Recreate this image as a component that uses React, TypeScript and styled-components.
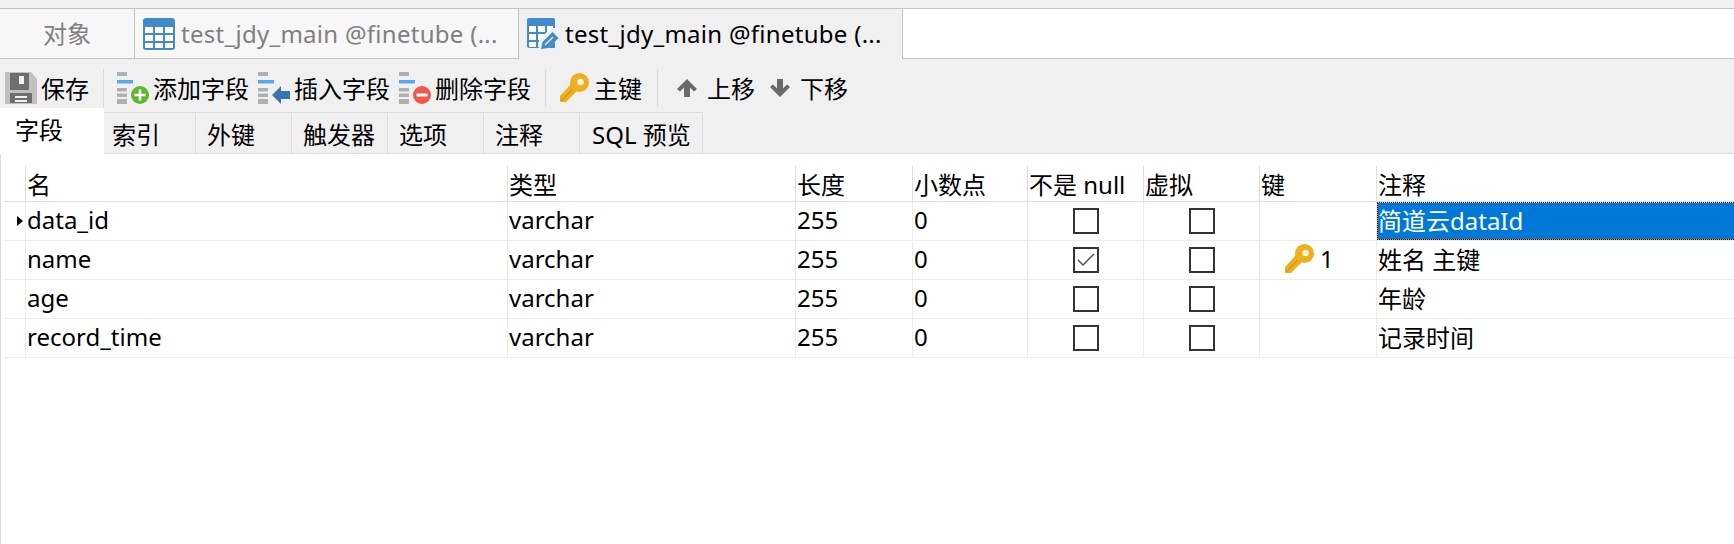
import React from 'react';
import styled, { createGlobalStyle } from 'styled-components';

const GlobalStyle = createGlobalStyle`
  html, body {
    margin: 0;
    padding: 0;
    background: #ffffff;
  }
  body {
    font-family: "Noto Sans", "Noto Sans CJK SC", sans-serif;
    font-size: 24px;
    color: #000000;
    overflow: hidden;
  }
  svg {
    flex: none;
    display: block;
  }
`;

const Window = styled.div`
  width: 1734px;
  height: 544px;
  display: flex;
  flex-direction: column;
  overflow: hidden;
`;

const TopStrip = styled.div`
  height: 8px;
  background: #f0f0f0;
  border-bottom: 1px solid #c4c4c4;
`;

const TabBar = styled.div`
  display: flex;
  height: 50px;
`;

const DocTab = styled.div<{ $active?: boolean; $width: number }>`
  width: ${p => p.$width}px;
  box-sizing: border-box;
  display: flex;
  align-items: center;
  gap: 6px;
  padding-left: 8px;
  white-space: nowrap;
  line-height: 50px;
  letter-spacing: 0.28px;
  background: ${p => (p.$active ? '#f0f0f0' : '#f7f7f7')};
  color: ${p => (p.$active ? '#000000' : '#808080')};
  border-right: 1px solid #c4c4c4;
  border-bottom: ${p => (p.$active ? 'none' : '1px solid #c4c4c4')};
`;

const ObjectTab = styled(DocTab)`
  justify-content: center;
  padding-left: 0;
  letter-spacing: 0;
`;

const TabFill = styled.div`
  flex: 1;
  background: #ffffff;
  border-bottom: 1px solid #c4c4c4;
`;

const Toolbar = styled.div`
  height: 49px;
  padding-top: 4px;
  display: flex;
  align-items: center;
  background: #f0f0f0;
`;

const ToolButton = styled.div<{ $width: number; $pad?: number; $gap?: number }>`
  width: ${p => p.$width}px;
  box-sizing: border-box;
  padding-left: ${p => p.$pad ?? 0}px;
  flex: none;
  display: flex;
  align-items: center;
  gap: ${p => p.$gap ?? 4}px;
  white-space: nowrap;
`;

const ToolSeparator = styled.div`
  width: 1px;
  height: 38px;
  flex: none;
  background: #d8d8d8;
`;

const SectionTabs = styled.div`
  height: 41px;
  display: flex;
  background: #f0f0f0;
  border-bottom: 1px solid #dcdcdc;
`;

const SectionTab = styled.div<{ $width: number; $pad?: number }>`
  width: ${p => p.$width}px;
  box-sizing: border-box;
  padding-left: ${p => p.$pad ?? 11}px;
  line-height: 43px;
  white-space: nowrap;
  border-top: 1px solid #dcdcdc;
  border-right: 1px solid #dcdcdc;
`;

const ActiveSectionTab = styled(SectionTab)`
  height: 46px;
  margin-top: -4px;
  line-height: 44px;
  background: #ffffff;
  border: none;
  position: relative;
`;

const GridArea = styled.div`
  flex: 1;
  padding: 12px 0 0 3px;
  background: #ffffff;
  border-left: 1px solid #dcdcdc;
`;

const Row = styled.div<{ $header?: boolean }>`
  display: grid;
  grid-template-columns: 21px 482px 288px 117px 115px 116px 116px 117px 1fr;
  height: ${p => (p.$header ? 36 : 39)}px;
  box-sizing: border-box;
  border-bottom: 1px solid ${p => (p.$header ? '#dedede' : '#ececec')};
`;

const Cell = styled.div<{ $header?: boolean; $center?: boolean }>`
  box-sizing: border-box;
  padding-left: ${p => (p.$center ? 0 : 1)}px;
  padding-bottom: ${p => (p.$header || p.$center ? 0 : 3)}px;
  display: flex;
  align-items: center;
  justify-content: ${p => (p.$center ? 'center' : 'flex-start')};
  white-space: nowrap;
  border-left: 1px solid ${p => (p.$header ? '#dedede' : '#ececec')};
`;

const SelectedCell = styled(Cell)`
  color: #ffffff;
  background-color: #0078d7;
  background-image:
    repeating-linear-gradient(90deg, #000000 0 1px, #e8e8e8 1px 2px),
    repeating-linear-gradient(90deg, #000000 0 1px, #ff9020 1px 2px),
    repeating-linear-gradient(0deg, #000000 0 1px, #ff9020 1px 2px);
  background-size: 100% 1px, 100% 1px, 1px 100%;
  background-position: 0 0, 0 100%, 0 0;
  background-repeat: no-repeat;
`;

const Gutter = styled.div`
  display: flex;
  align-items: center;
  justify-content: flex-end;
  padding-right: 2px;
`;

const Marker = styled.div`
  width: 0;
  height: 0;
  border-left: 6px solid #000000;
  border-top: 5px solid transparent;
  border-bottom: 5px solid transparent;
`;

const Check = styled.div`
  width: 26px;
  height: 26px;
  box-sizing: border-box;
  border: 2px solid #333333;
  display: flex;
  align-items: center;
  justify-content: center;
`;

const KeyCell = styled.div`
  display: flex;
  align-items: center;
  gap: 6px;
  padding-left: 24px;
`;

const TableIcon = () => (
  <svg width="32" height="32" viewBox="0 0 32 32">
    <path d="M3 0h26a3 3 0 0 1 3 3v26a3 3 0 0 1-3 3H3a3 3 0 0 1-3-3V3a3 3 0 0 1 3-3z" fill="#428bca" />
    <path d="M2 9h8v6H2zM12 9h8v6h-8zM22 9h8v6h-8zM2 17h8v6H2zM12 17h8v6h-8zM22 17h8v6h-8zM2 25h8v5H2zM12 25h8v5h-8zM22 25h8v5h-8z" fill="#ffffff" />
  </svg>
);

const TableEditIcon = () => (
  <svg width="32" height="32" viewBox="0 0 32 32">
    <path d="M2 0h24a2 2 0 0 1 2 2v28H2a2 2 0 0 1-2-2V2a2 2 0 0 1 2-2z" fill="#428bca" />
    <path d="M2 8h7v6H2zM11 8h7v6h-7zM20 8h6v6h-6zM2 16h7v6H2zM11 16h7v6h-7zM20 16h6v6h-6zM2 24h7v5H2zM11 24h7v5h-7z" fill="#ffffff" />
    <path d="M12 32V22L24 10h8v8L20 32z" fill="#f0f0f0" />
    <path d="M14 31l1.500-7 10-10 6 6-10 10z" fill="#428bca" />
    <path d="M18 27l8-8" stroke="#f0f0f0" strokeWidth="1.200" />
  </svg>
);

const SaveIcon = () => (
  <svg width="32" height="32" viewBox="0 0 32 32">
    <path d="M0 0h26l6 7v25H0z" fill="#c0c0c0" />
    <path d="M5 1h19v17H5zM5 21h22v10H5z" fill="#6e6e6e" />
    <path d="M14 4h5v8h-5z" fill="#f2f2f2" />
    <path d="M10 24h12v2H10zM10 28h12v2H10z" fill="#f2f2f2" />
  </svg>
);

const FieldBars = () => (
  <>
    <path d="M0 0h10v4H0z" fill="#b0b0b0" />
    <path d="M0 8h16v3.500H0z" fill="#56a8e8" />
    <path d="M0 16h10v3.500H0zM0 21.500h10v3.500H0zM0 27h10v5H0z" fill="#b0b0b0" />
  </>
);

const AddFieldIcon = () => (
  <svg width="32" height="32" viewBox="0 0 32 32">
    <FieldBars />
    <circle cx="23" cy="23" r="9" fill="#5cb82c" />
    <path d="M17.500 21.700h11v2.600h-11zM21.700 17.500h2.600v11h-2.600z" fill="#ffffff" />
  </svg>
);

const InsertFieldIcon = () => (
  <svg width="32" height="32" viewBox="0 0 32 32">
    <FieldBars />
    <path d="M14 23l9-9v5h9v8h-9v5z" fill="#3a76ae" />
  </svg>
);

const RemoveFieldIcon = () => (
  <svg width="32" height="32" viewBox="0 0 32 32">
    <FieldBars />
    <circle cx="23" cy="23" r="9" fill="#f0584a" />
    <path d="M17.500 21.500h11v3h-11z" fill="#ffffff" />
  </svg>
);

const KeyIcon = () => (
  <svg width="29" height="29" viewBox="0 0 29 29">
    <path d="M11 11L0 23v6h6l12-12z" fill="#eeb020" />
    <path d="M1 28l12-12" stroke="#d29a1c" strokeWidth="1.500" />
    <circle cx="19.500" cy="9.500" r="9.500" fill="#eeb020" />
    <circle cx="20.500" cy="9" r="3.200" fill="#fbf3dc" />
  </svg>
);

const UpIcon = () => (
  <svg width="20" height="18" viewBox="0 0 20 18">
    <path d="M10 0l10 10-3 2.500-4-4V18H7V8.500l-4 4L0 10z" fill="#6a6a6a" />
  </svg>
);

const DownIcon = () => (
  <svg width="20" height="18" viewBox="0 0 20 18">
    <path d="M10 18L0 8l3-2.500 4 4V0h6v9.500l4-4L20 8z" fill="#6a6a6a" />
  </svg>
);

const TickIcon = () => (
  <svg width="18" height="14" viewBox="0 0 18 14">
    <path d="M1 7l5 5L17 1" fill="none" stroke="#555555" strokeWidth="1.500" />
  </svg>
);

const sectionTabs = [
  { label: '索引', width: 92, pad: 8 },
  { label: '外键', width: 96 },
  { label: '触发器', width: 96 },
  { label: '选项', width: 96 },
  { label: '注释', width: 96 },
  { label: 'SQL 预览', width: 123, pad: 12 },
];

const columns = ['名', '类型', '长度', '小数点', '不是 null', '虚拟', '键', '注释'];

const fields = [
  { name: 'data_id', notNull: false, keyOrder: 0, comment: '简道云dataId' },
  { name: 'name', notNull: true, keyOrder: 1, comment: '姓名 主键' },
  { name: 'age', notNull: false, keyOrder: 0, comment: '年龄' },
  { name: 'record_time', notNull: false, keyOrder: 0, comment: '记录时间' },
];

export default function App() {
  return (
    <Window>
      <GlobalStyle />
      <TopStrip />
      <TabBar>
        <ObjectTab $width={135}>对象</ObjectTab>
        <DocTab $width={384}>
          <TableIcon />
          test_jdy_main @finetube (...
        </DocTab>
        <DocTab $active $width={384}>
          <TableEditIcon />
          test_jdy_main @finetube (...
        </DocTab>
        <TabFill />
      </TabBar>
      <Toolbar>
        <ToolButton $width={103} $pad={5}>
          <SaveIcon />
          保存
        </ToolButton>
        <ToolSeparator />
        <ToolButton $width={154} $pad={13}>
          <AddFieldIcon />
          添加字段
        </ToolButton>
        <ToolButton $width={141}>
          <InsertFieldIcon />
          插入字段
        </ToolButton>
        <ToolButton $width={146}>
          <RemoveFieldIcon />
          删除字段
        </ToolButton>
        <ToolSeparator />
        <ToolButton $width={111} $pad={14} $gap={5}>
          <KeyIcon />
          主键
        </ToolButton>
        <ToolSeparator />
        <ToolButton $width={112} $pad={19} $gap={10}>
          <UpIcon />
          上移
        </ToolButton>
        <ToolButton $width={93} $gap={10}>
          <DownIcon />
          下移
        </ToolButton>
      </Toolbar>
      <SectionTabs>
        <ActiveSectionTab $width={104} $pad={15}>
          字段
        </ActiveSectionTab>
        {sectionTabs.map(tab => (
          <SectionTab key={tab.label} $width={tab.width} $pad={tab.pad}>
            {tab.label}
          </SectionTab>
        ))}
      </SectionTabs>
      <GridArea>
        <Row $header>
          <div />
          {columns.map(col => (
            <Cell key={col} $header>
              {col}
            </Cell>
          ))}
        </Row>
        {fields.map((field, index) => (
          <Row key={field.name}>
            <Gutter>{index === 0 && <Marker />}</Gutter>
            <Cell>{field.name}</Cell>
            <Cell>varchar</Cell>
            <Cell>255</Cell>
            <Cell>0</Cell>
            <Cell $center>
              <Check>{field.notNull && <TickIcon />}</Check>
            </Cell>
            <Cell $center>
              <Check />
            </Cell>
            <Cell>
              {field.keyOrder > 0 && (
                <KeyCell>
                  <KeyIcon />
                  {field.keyOrder}
                </KeyCell>
              )}
            </Cell>
            {index === 0 ? <SelectedCell>{field.comment}</SelectedCell> : <Cell>{field.comment}</Cell>}
          </Row>
        ))}
      </GridArea>
    </Window>
  );
}
